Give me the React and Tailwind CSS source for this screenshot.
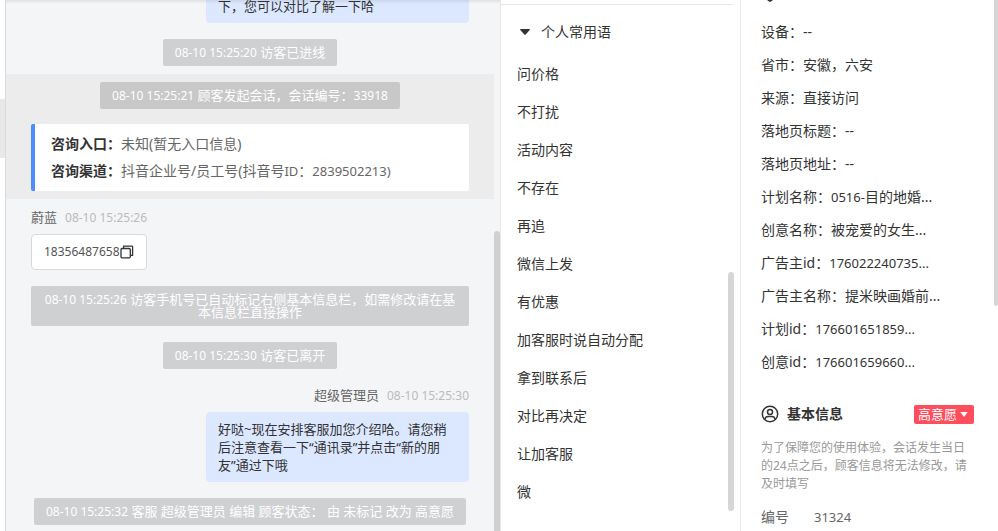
import { useState } from 'react';

const frases = [
    '问价格',
    '不打扰',
    '活动内容',
    '不存在',
    '再追',
    '微信上发',
    '有优惠',
    '加客服时说自动分配',
    '拿到联系后',
    '对比再决定',
    '让加客服',
    '微',
];

const visitorInfo = [
    { label: '设备', value: '--' },
    { label: '省市', value: '安徽，六安' },
    { label: '来源', value: '直接访问' },
    { label: '落地页标题', value: '--' },
    { label: '落地页地址', value: '--' },
    { label: '计划名称', code: '0516-', value: '目的地婚...' },
    { label: '创意名称', value: '被宠爱的女生...' },
    { label: '广告主id', code: '176022240735...' },
    { label: '广告主名称', value: '提米映画婚前...' },
    { label: '计划id', code: '176601651859...' },
    { label: '创意id', code: '176601659660...' },
];

const Notice = ({ time, children }) => (
    <p className="mx-auto w-fit rounded-xs bg-black/15 px-3 py-[7px] text-center text-[13px] leading-[13px] text-white">
        <span className="text-xs leading-[13px]">{time}</span> {children}
    </p>
);

const Sender = ({ name, time }) => (
    <p className="flex h-[18px] items-center gap-2 text-[13px] text-[#666]">
        {name}
        <time className="text-xs text-[#bbb]">{time}</time>
    </p>
);

const CopyIcon = () => (
    <svg width="14" height="14" viewBox="0 0 14 14" fill="none" stroke="#333" strokeWidth="1.3" strokeLinejoin="round">
        <rect x="1" y="3.5" width="9.3" height="9.3" rx="1" />
        <path d="M3.6 3.2V1.2h8.2c.5 0 .8.3.8.8v8.4h-2" />
    </svg>
);

const UserIcon = () => (
    <svg width="18" height="18" viewBox="0 0 18 18" fill="none" stroke="#333" strokeWidth="1.5">
        <circle cx="9" cy="9" r="7.7" />
        <circle cx="9" cy="7" r="2.5" />
        <path d="M3.8 14.4c.5-2 1.8-2.9 3.4-2.9h3.6c1.6 0 2.9.9 3.4 2.9" />
    </svg>
);

const ChatPanel = () => (
    <main className="relative flex min-w-0 flex-1 border-x border-l-[#d9dadd] border-r-[#e8e8e8] bg-[#f4f5f7]">
        <div className="min-w-0 flex-1">
            <div className="flex justify-end px-[25px]">
                <p className="h-[23px] w-[263px] rounded-b bg-[#dce8ff] px-3 text-[13px] leading-[12px] text-[#333]">下，您可以对比了解一下哈</p>
            </div>

            <div className="px-[25px] pt-4 pb-2">
                <Notice time="08-10 15:25:20">访客已进线</Notice>
            </div>

            <section className="bg-[#ececec] px-[25px] py-2">
                <Notice time="08-10 15:25:21">顾客发起会话，会话编号：<span className="text-xs leading-[13px]">33918</span></Notice>
                <dl className="mt-[15px] rounded-xs border-l-4 border-[#4c8dff] bg-white px-4 pt-1.5 pb-[7px] text-sm leading-[27px]">
                    <div className="flex h-[27px]">
                        <dt className="font-bold text-[#333]">咨询入口：</dt>
                        <dd className="text-[#666]">未知(暂无入口信息)</dd>
                    </div>
                    <div className="flex h-[27px]">
                        <dt className="font-bold text-[#333]">咨询渠道：</dt>
                        <dd className="text-[#666]">抖音企业号/员工号(抖音号<span className="text-[13px]">ID</span>：<span className="text-[13px]">2839502213)</span></dd>
                    </div>
                </dl>
            </section>

            <div className="px-[25px] pt-2.5">
                <Sender name="蔚蓝" time="08-10 15:25:26" />
                <div className="mt-[7px] flex h-9 w-fit items-center rounded border border-[#d9d9d9] bg-white px-3 text-xs text-[#555]">
                    18356487658
                    <button type="button" aria-label="复制"><CopyIcon /></button>
                </div>
            </div>

            <div className="space-y-4 px-[25px] pt-4">
                <Notice time="08-10 15:25:26">访客手机号已自动标记右侧基本信息栏，如需修改请在基本信息栏直接操作</Notice>
                <Notice time="08-10 15:25:30">访客已离开</Notice>
            </div>

            <div className="flex flex-col items-end px-[25px] pt-[18px]">
                <Sender name="超级管理员" time="08-10 15:25:30" />
                <p className="mt-[7px] max-w-[263px] rounded bg-[#dce8ff] px-3 py-2 text-[13px] leading-[18px] text-[#333]">
                    好哒~现在安排客服加您介绍哈。请您稍后注意查看一下“通讯录”并点击“新的朋友”通过下哦
                </p>
            </div>

            <div className="px-[25px] pt-4">
                <Notice time="08-10 15:25:32">客服 超级管理员 编辑 顾客状态： 由 未标记 改为 高意愿</Notice>
            </div>
        </div>
        <div className="mt-[231px] w-1.5 shrink-0 rounded-t-full bg-[#d0d0d0]"></div>
        <div className="absolute inset-x-0 top-0 h-1 bg-linear-to-b from-black/8 to-transparent"></div>
    </main>
);

const PhrasePanel = () => {
    const [open, setOpen] = useState(true);

    return (
        <aside className="relative w-[240px] shrink-0 border-r border-[#e8e8e8] text-sm text-[#333]">
            <div className="mr-1.5 h-[5px] border-b border-[#e8e8e8]"></div>
            <button type="button" className="mt-1 flex h-[46px] items-center gap-[11px] pl-[19px]" aria-expanded={open} onClick={() => setOpen(!open)}>
                <svg width="10" height="6" viewBox="0 0 10 6" fill="#333"><path d="M.8 0h8.4c.7 0 .9.6.5 1L5.7 5.5c-.4.4-1 .4-1.4 0L.3 1C-.1.6.1 0 .8 0z" /></svg>
                <span>个人常用语</span>
            </button>
            {open && (
                <ul className="px-4">
                    {frases.map((frase) => (
                        <li key={frase} className="truncate leading-[38px]">{frase}</li>
                    ))}
                </ul>
            )}
            <div className="absolute top-[272px] right-1.5 h-[239px] w-1.5 rounded-full bg-[#d6d6d6]"></div>
        </aside>
    );
};

const InfoPanel = () => (
    <aside className="relative w-[257px] shrink-0 pr-6 pl-5">
        <svg className="absolute top-0 left-[25px]" width="8" height="2" viewBox="0 0 8 2" fill="#333"><path d="M1 0h6L5 1.6c-.6.5-1.4.5-2 0z" /></svg>
        <dl className="pt-[15px] text-sm leading-[33px] text-[#333]">
            {visitorInfo.map(({ label, code, value }) => (
                <div key={label} className="flex h-[33px] whitespace-nowrap">
                    <dt>{label}：</dt>
                    <dd><span className="text-[13px]">{code}</span>{value}</dd>
                </div>
            ))}
        </dl>

        <div className="mt-6 flex h-6 items-center">
            <UserIcon />
            <h2 className="ml-2 text-sm font-bold text-[#333]">基本信息</h2>
            <div className="relative ml-auto">
                <select aria-label="顾客状态" className="block h-[19px] w-[60px] appearance-none rounded-xs bg-[#ff4d5b] pl-1 text-[13px] leading-[19px] text-white">
                    <option>高意愿</option>
                </select>
                <svg className="pointer-events-none absolute top-[7px] right-1.5" width="8" height="5" viewBox="0 0 8 5" fill="#fff"><path d="M.3 0h7.4L4 5z" /></svg>
            </div>
        </div>
        <p className="mt-[13px] text-xs leading-[18px] text-[#999]">为了保障您的使用体验，会话发生当日的24点之后，顾客信息将无法修改，请及时填写</p>
        <p className="mt-[15px] flex h-[18px] items-center text-sm text-[#666]">
            <span className="w-[53px]">编号</span>
            <span className="text-[13px]">31324</span>
        </p>
        <div className="absolute top-0 right-0 h-[306px] w-1 rounded-b-full bg-[#d6d6d6]"></div>
    </aside>
);

const App = () => {
    return (
        <div className="flex h-screen overflow-hidden bg-white font-['Noto_Sans','Noto_Sans_CJK_SC',sans-serif]">
            <div className="w-[5px] shrink-0 pt-[99px]">
                <div className="h-[59px] bg-[#e8e8e8]"></div>
            </div>
            <ChatPanel />
            <PhrasePanel />
            <InfoPanel />
        </div>
    );
};

export default App;
